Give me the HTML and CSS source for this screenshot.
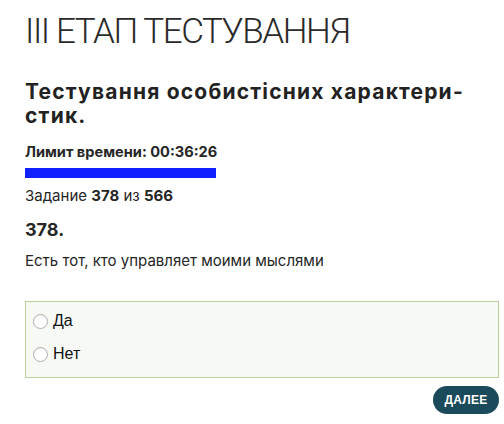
FILE: index.html
```html
<!DOCTYPE html>
<html lang="ru">
<head>
<meta charset="utf-8">
<link rel="stylesheet" href="styles.css">
</head>
<body>
<div class="page">
  <h1 class="stage">III ЕТАП ТЕСТУВАННЯ</h1>
  <h2 class="test-title">Тестування особистісних характери-<br>стик.</h2>
  <div class="timer">Лимит времени: 00:36:26</div>
  <div class="progress"></div>
  <div class="task">Задание <b>378</b> из <b>566</b></div>
  <div class="qnum">378.</div>
  <div class="qtext">Есть тот, кто управляет моими мыслями</div>
  <div class="answers">
    <label class="answer"><span class="radio"></span><span>Да</span></label>
    <label class="answer"><span class="radio"></span><span>Нет</span></label>
  </div>
  <div class="actions"><button class="next">ДАЛЕЕ</button></div>
</div>
</body>
</html>
```
FILE: styles.css
```css
html, body {
  margin: 0;
  padding: 0;
  background: #fff;
}
.page {
  padding: 10px 5px 0 25px;
  font-family: "Inter", "Liberation Sans", sans-serif;
  color: #262626;
}
.stage {
  margin: 0;
  font-family: "Roboto", sans-serif;
  font-weight: 300;
  font-size: 35px;
  line-height: 44px;
  letter-spacing: -1.4px;
  color: #2a2a2a;
}
.test-title {
  margin: 26px 0 0;
  font-size: 21px;
  line-height: 24px;
  font-weight: 700;
  letter-spacing: 1.2px;
  color: #222;
}
.timer {
  margin-top: 15px;
  font-size: 14.6px;
  line-height: 18px;
  font-weight: 700;
}
.progress {
  margin-top: 7px;
  width: 191px;
  height: 10px;
  background: #1020ff;
}
.task {
  margin-top: 9px;
  font-size: 15px;
  line-height: 18px;
}
.task b { font-weight: 700; }
.qnum {
  margin-top: 14px;
  font-size: 18px;
  line-height: 22px;
  font-weight: 700;
}
.qtext {
  margin-top: 11px;
  font-size: 15px;
  line-height: 18px;
}
.answers {
  margin-top: 31px;
  border: 1px solid #bccf99;
  background: #f7f9f4;
  padding: 10px 7px 14px;
  display: flex;
  flex-direction: column;
  gap: 15px;
}
.answer {
  display: flex;
  align-items: center;
  gap: 5px;
  font-family: "Liberation Sans", Arial, sans-serif;
  font-size: 16px;
  line-height: 18px;
  color: #111;
}
.radio {
  width: 13px;
  height: 13px;
  border-radius: 50%;
  border: 1px solid #b0b0b0;
  background: #fff;
  box-shadow: inset 0 1px 1px rgba(0,0,0,0.08);
}
.actions {
  display: flex;
  justify-content: flex-end;
  margin-top: 8px;
}
.next {
  height: 28px;
  width: 66px;
  border: none;
  border-radius: 14px;
  background: #1b4a5b;
  color: #fff;
  font-family: "Liberation Sans", Arial, sans-serif;
  font-weight: 700;
  font-size: 12px;
  letter-spacing: 0.2px;
  padding: 0;
}
```
